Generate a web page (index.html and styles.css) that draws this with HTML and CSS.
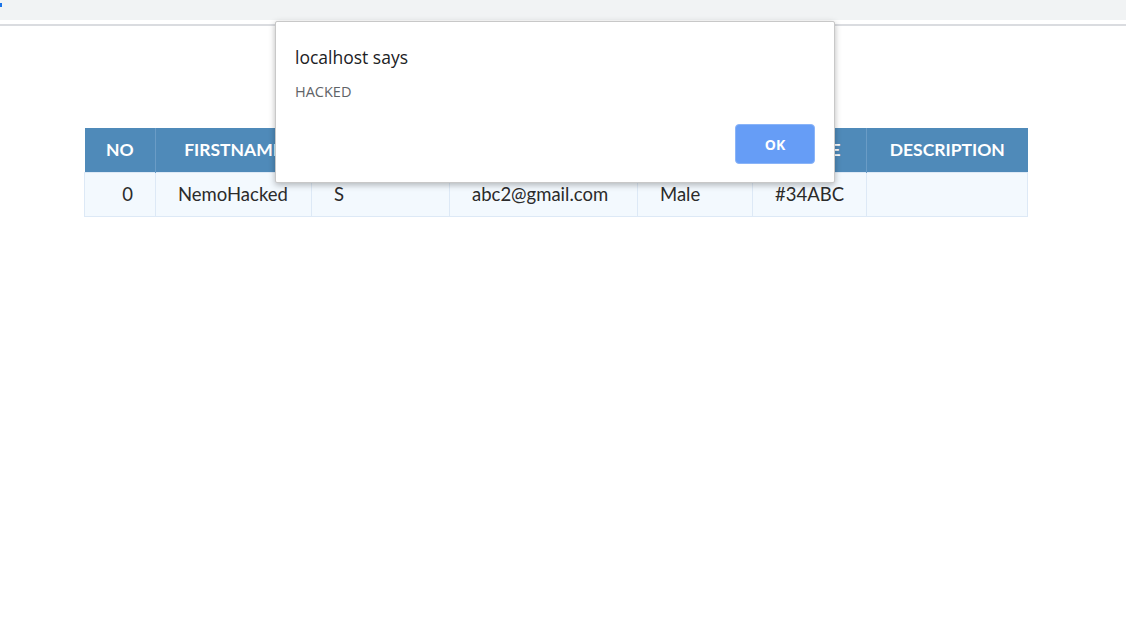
FILE: index.html
```html
<!DOCTYPE html>
<html>
<head>
<meta charset="utf-8">
<link rel="stylesheet" href="styles.css">
</head>
<body>
<div class="topbar"><span class="tab-mark"></span></div>
<div class="divider"></div>
<main class="content">
  <table class="data">
    <colgroup>
      <col class="c-no"><col class="c-first"><col class="c-last"><col class="c-email"><col class="c-gender"><col class="c-code"><col class="c-desc">
    </colgroup>
    <thead>
      <tr><th>NO</th><th>FIRSTNAME</th><th>LASTNAME</th><th>EMAIL</th><th>GENDER</th><th>PHONE</th><th>DESCRIPTION</th></tr>
    </thead>
    <tbody>
      <tr><td class="num">0</td><td>NemoHacked</td><td>S</td><td>abc2@gmail.com</td><td>Male</td><td>#34ABC</td><td></td></tr>
    </tbody>
  </table>
</main>
<div class="dialog">
  <div class="dialog-title">localhost says</div>
  <div class="dialog-msg">HACKED</div>
  <div class="dialog-actions"><button class="ok">OK</button></div>
</div>
</body>
</html>
```

FILE: styles.css
```css
html, body { margin: 0; padding: 0; background: #fff; }
body { font-family: Lato, "Open Sans", sans-serif; }
.topbar { height: 20px; background: #f1f3f4; position: relative; }
.tab-mark { display: block; width: 2px; height: 4px; background: #1a73e8; position: absolute; left: 0; top: 3px; }
.divider { margin-top: 4px; height: 2px; background: #dadce0; }
.content { padding: 102px 0 0 84px; }
.data { border-collapse: collapse; table-layout: fixed; width: 943px; font-size: 18.5px; }
.c-no { width: 71px; } .c-first { width: 156px; } .c-last { width: 138px; } .c-email { width: 188px; }
.c-gender { width: 115px; } .c-code { width: 114px; } .c-desc { width: 161px; }
.data th { background: #4f8ab9; color: #fff; font-weight: 700; font-size: 17.5px; height: 44px; padding: 0; text-align: center; border-left: 1px solid #6a9cc6; box-sizing: border-box; white-space: nowrap; overflow: hidden; }
.data th:first-child { border-left: none; }
.data td { background: #f3f9fe; color: #2b2b2b; height: 44px; padding: 0 22px; text-align: left; border: 1px solid #dde9f6; box-sizing: border-box; white-space: nowrap; }
.data td.num { text-align: right; }
.dialog { position: absolute; left: 275px; top: 21px; width: 560px; height: 162px; box-sizing: border-box; background: #fff; border: 1px solid #c8c8c8; border-radius: 2px; box-shadow: 0 2px 6px rgba(0,0,0,0.28); padding: 23px 19px 0 19px; font-family: "Open Sans", "Noto Sans", sans-serif; }
.dialog-title { font-size: 17.5px; line-height: 24px; color: #202124; }
.dialog-msg { margin-top: 13px; font-size: 14.5px; line-height: 20px; color: #5f6368; }
.dialog-actions { display: flex; justify-content: flex-end; margin-top: 22px; }
.ok { width: 80px; height: 40px; background: #669df6; color: #fff; border: 1px solid #8ab4f8; border-radius: 4px; font-family: "Open Sans", sans-serif; font-weight: 700; font-size: 14px; padding: 0; }
```
